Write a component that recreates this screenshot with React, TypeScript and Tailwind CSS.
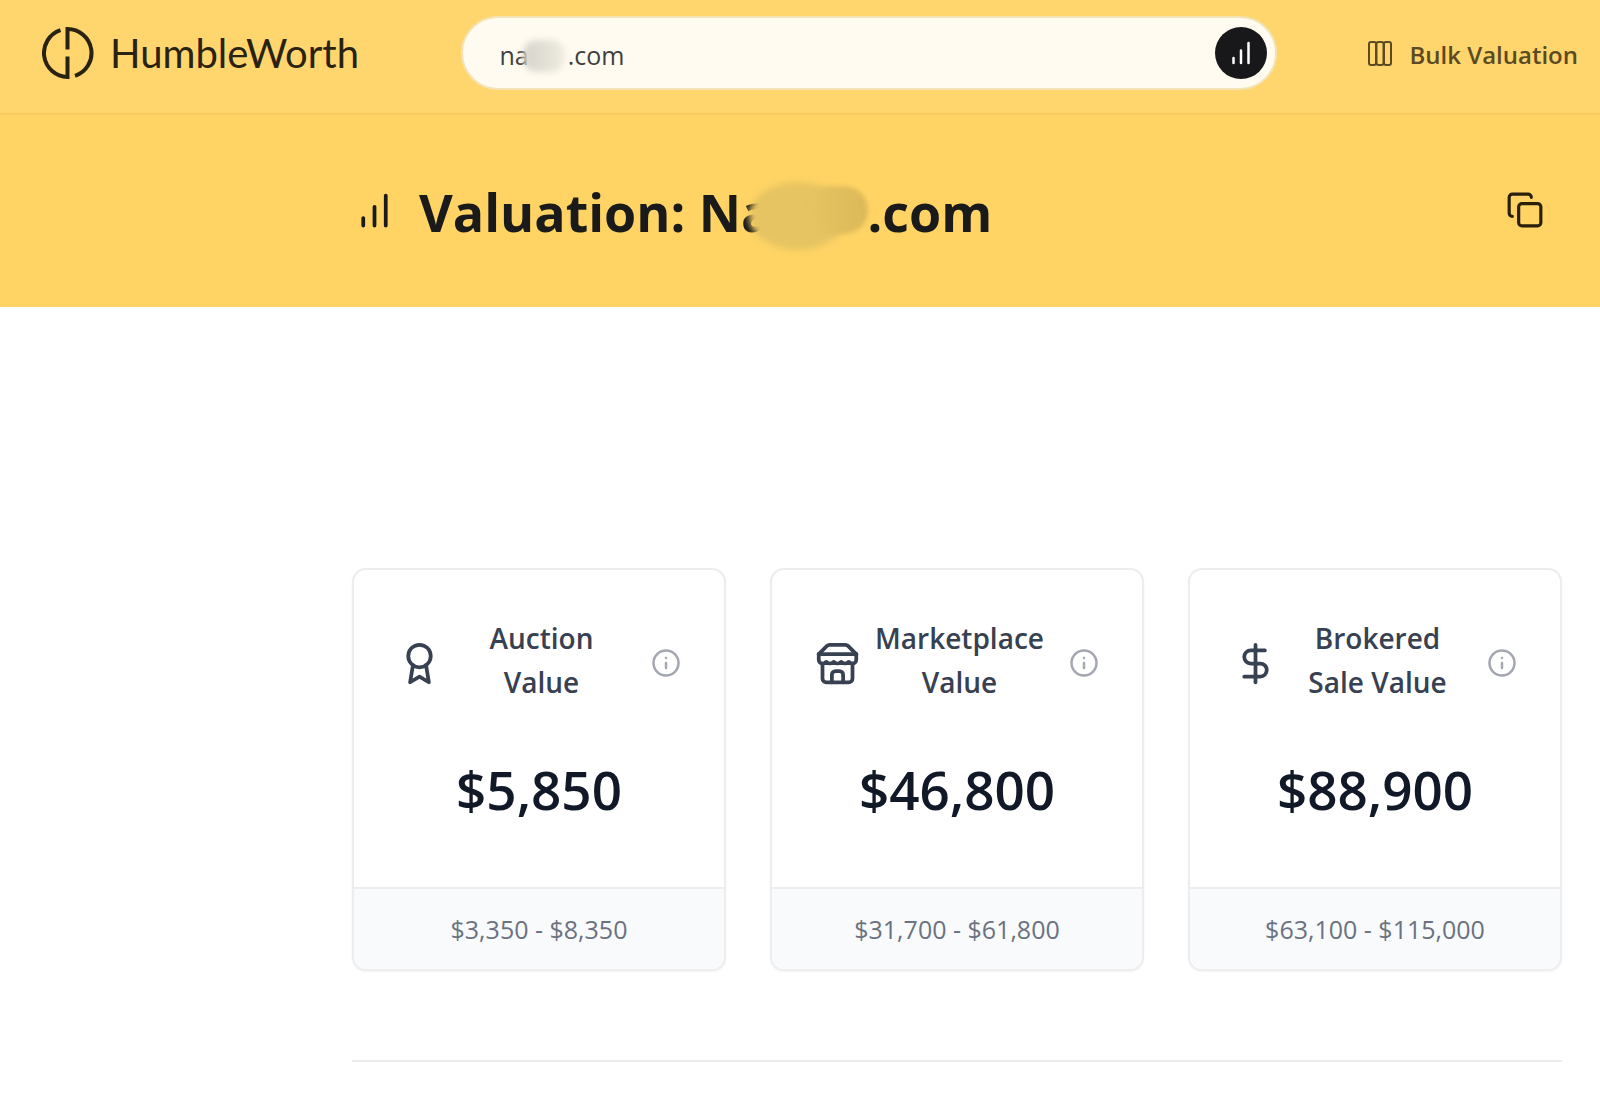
import { Copy, DollarSign, Info } from "lucide-react";
import { useState } from "react";
import type { ReactNode } from "react";

type Valuation = {
  title: [string, string];
  icon: ReactNode;
  price: string;
  range: string;
};

const valuations: Valuation[] = [
  { title: ["Auction", "Value"], icon: <AwardIcon />, price: "$5,850", range: "$3,350 - $8,350" },
  { title: ["Marketplace", "Value"], icon: <StoreIcon />, price: "$46,800", range: "$31,700 - $61,800" },
  { title: ["Brokered", "Sale Value"], icon: <DollarSign size={45} className="shrink-0" />, price: "$88,900", range: "$63,100 - $115,000" }
];

function AwardIcon() {
  return (
    <svg width="45" height="45" viewBox="0 0 24 24" fill="none" stroke="currentColor" strokeWidth="2" strokeLinecap="round" strokeLinejoin="round" aria-hidden="true" className="shrink-0">
      <circle cx="12" cy="8" r="6" />
      <path d="M15.477 12.890 17 22l-5-3-5 3 1.523-9.110" />
    </svg>
  );
}

function StoreIcon() {
  return (
    <svg width="45" height="45" viewBox="0 0 24 24" fill="none" stroke="currentColor" strokeWidth="2" strokeLinecap="round" strokeLinejoin="round" aria-hidden="true" className="shrink-0">
      <path d="m2 7 4.410-4.410A2 2 0 0 1 7.830 2h8.340a2 2 0 0 1 1.420.590L22 7" />
      <path d="M4 12v8a2 2 0 0 0 2 2h12a2 2 0 0 0 2-2v-8" />
      <path d="M15 22v-4a2 2 0 0 0-2-2h-2a2 2 0 0 0-2 2v4" />
      <path d="M2 7h20" />
      <path d="M22 7v3a2 2 0 0 1-2 2a2.700 2.700 0 0 1-1.590-.630.700.700 0 0 0-.820 0A2.700 2.700 0 0 1 16 12a2.700 2.700 0 0 1-1.590-.630.700.700 0 0 0-.820 0A2.700 2.700 0 0 1 12 12a2.700 2.700 0 0 1-1.590-.630.700.700 0 0 0-.820 0A2.700 2.700 0 0 1 8 12a2.700 2.700 0 0 1-1.590-.630.700.700 0 0 0-.820 0A2.700 2.700 0 0 1 4 12a2 2 0 0 1-2-2V7" />
    </svg>
  );
}

function BarsIcon({ size }: { size: number }) {
  return (
    <svg width={size} height={size} viewBox="0 0 24 24" fill="none" stroke="currentColor" strokeWidth="2" strokeLinecap="round" aria-hidden="true" className="shrink-0">
      <path d="M6 20v-4M12 20V10M18 20V4" />
    </svg>
  );
}

function ColumnsIcon() {
  return (
    <svg width="26" height="26" viewBox="0 0 26 26" fill="none" stroke="currentColor" strokeWidth="2" aria-hidden="true" className="shrink-0">
      <rect x="2" y="2" width="7" height="23" rx="2" />
      <rect x="9.5" y="2" width="7" height="23" rx="2" />
      <rect x="17" y="2" width="7" height="23" rx="2" />
    </svg>
  );
}

function Logo() {
  return (
    <a href="#" className="flex items-center gap-4 text-[#2a2210]">
      <svg width="52" height="52" viewBox="0 0 52 52" fill="none" stroke="currentColor" strokeWidth="4" aria-hidden="true">
        <path d="M18.500 3.200A24 24 0 0 0 25.500 50V29.500" />
        <path d="M33 48.800A24 24 0 0 0 25.500 2V22.500" />
      </svg>
      <span className="font-[Lato,sans-serif] text-[40px] leading-[52px]">HumbleWorth</span>
    </a>
  );
}

function ValueCard({ item }: { item: Valuation }) {
  return (
    <article className="overflow-hidden rounded-[14px] border-2 border-[#ededf0] bg-white shadow-xs">
      <div className="px-[43px] pt-[46px] pb-[61px]">
        <div className="flex items-center text-[#374151]">
          {item.icon}
          <h2 className="flex-1 pb-[6px] text-center text-[28px] leading-[44px] font-semibold">
            {item.title[0]}
            <br />
            {item.title[1]}
          </h2>
          <button type="button" aria-label={`About ${item.title.join(" ")}`} className="ml-[10px] text-[#a3a7b0]">
            <Info size={30} />
          </button>
        </div>
        <p className="mt-11 text-center text-[53px] leading-[72px] font-semibold text-[#111827]">{item.price}</p>
      </div>
      <p className="border-t-2 border-[#ededf0] bg-[#f8fafc] py-[22px] text-center text-[25px] leading-[36px] text-[#6b7280]">{item.range}</p>
    </article>
  );
}

export default function App() {
  const [domain, setDomain] = useState("na      .com");

  return (
    <div className="min-h-screen bg-white font-['Open_Sans',sans-serif]">
      <header className="flex items-center border-b-2 border-[#f8cc62] bg-[#ffd66d] pt-4 pr-[22px] pb-[23px] pl-[42px]">
        <Logo />
        <form className="relative mr-[90px] ml-auto flex h-[74px] w-[816px] items-center rounded-full border-2 border-[#f3e3b5] bg-[#fffbf0] pr-2 pl-9" onSubmit={(event) => event.preventDefault()}>
          <input
            aria-label="Domain"
            className="min-w-0 flex-1 bg-transparent pt-1 text-[25px] leading-9 text-[#3f3f40] outline-none"
            value={domain}
            onChange={(event) => setDomain(event.target.value)}
          />
          <span className="absolute top-[22px] left-[60px] h-8 w-[42px] rounded-[14px] bg-linear-to-r from-[#d6d4cb] to-[#eeece1] blur-[3px]" />
          <button type="submit" aria-label="Value domain" className="flex size-[52px] items-center justify-center rounded-full bg-[#18181b] text-white">
            <BarsIcon size={30} />
          </button>
        </form>
        <a href="#" className="flex items-center gap-4 text-[24px] leading-9 font-semibold text-[#5c4a22]">
          <ColumnsIcon />
          <span className="pt-1">Bulk Valuation</span>
        </a>
      </header>

      <section className="bg-[#ffd465] pt-[55px] pr-[38px] pb-[57px] pl-[352px]">
        <div className="flex items-center text-[#1a1a1a]">
          <BarsIcon size={45} />
          <h1 className="ml-[22px] flex pt-1 text-[52px] leading-[76px] font-bold whitespace-pre">
            Valuation: Na
            <span className="relative w-[95px]">
              <span className="absolute top-2 -left-6 h-[68px] w-[98px] rounded-[50%] bg-[#e6c462] blur-[3px]" />
              <span className="absolute top-3 right-0 h-12 w-[60px] rounded-[24px] bg-linear-to-r from-[#e6c462] to-[#dcb958] blur-[2px]" />
            </span>
            .com
          </h1>
          <button type="button" aria-label="Copy" className="mr-[18px] ml-auto text-[#2a1f08]">
            <Copy size={38} />
          </button>
        </div>
      </section>

      <main className="pt-[261px] pr-[38px] pl-[352px]">
        <div className="grid grid-cols-3 gap-[44px]">
          {valuations.map((item) => <ValueCard key={item.price} item={item} />)}
        </div>
        <hr className="mt-[89px] border-t-2 border-[#ededf0]" />
      </main>
    </div>
  );
}
